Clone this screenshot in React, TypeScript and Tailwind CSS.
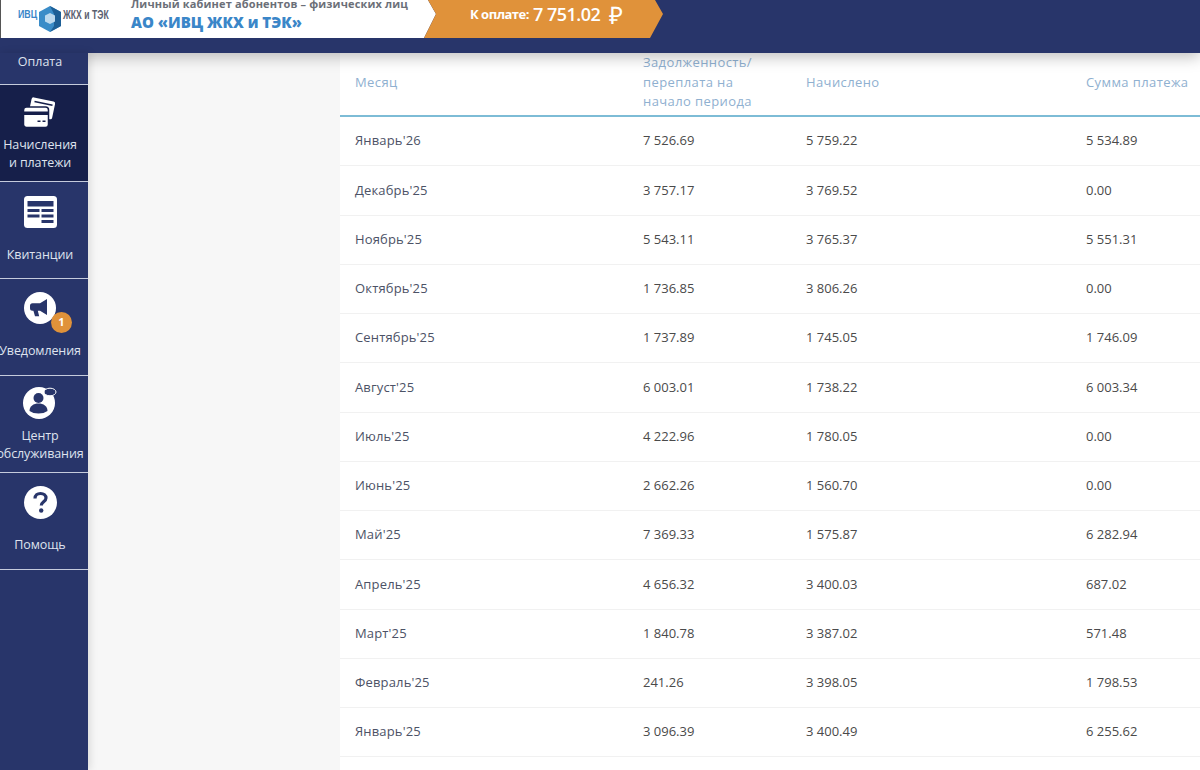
const rows = [
  ["Январь'26", "7 526.69", "5 759.22", "5 534.89"],
  ["Декабрь'25", "3 757.17", "3 769.52", "0.00"],
  ["Ноябрь'25", "5 543.11", "3 765.37", "5 551.31"],
  ["Октябрь'25", "1 736.85", "3 806.26", "0.00"],
  ["Сентябрь'25", "1 737.89", "1 745.05", "1 746.09"],
  ["Август'25", "6 003.01", "1 738.22", "6 003.34"],
  ["Июль'25", "4 222.96", "1 780.05", "0.00"],
  ["Июнь'25", "2 662.26", "1 560.70", "0.00"],
  ["Май'25", "7 369.33", "1 575.87", "6 282.94"],
  ["Апрель'25", "4 656.32", "3 400.03", "687.02"],
  ["Март'25", "1 840.78", "3 387.02", "571.48"],
  ["Февраль'25", "241.26", "3 398.05", "1 798.53"],
  ["Январь'25", "3 096.39", "3 400.49", "6 255.62"],
];

function CardsIcon() {
  return (
    <svg width="34" height="32" viewBox="0 0 34 32">
      <rect x="9" y="1" width="24" height="18" rx="2" fill="white" transform="rotate(12 9 1)" />
      <path d="M11.500 5.500 29.500 9.300" stroke="#161f4a" strokeWidth="1.600" />
      <rect x="0.500" y="11" width="25" height="20.500" rx="3" fill="white" stroke="#161f4a" strokeWidth="1.500" />
      <rect x="1" y="15.500" width="24" height="3.500" fill="#161f4a" />
      <rect x="14.500" y="24.500" width="3" height="1.500" fill="#161f4a" />
      <rect x="19.500" y="24.500" width="3" height="1.500" fill="#161f4a" />
    </svg>
  );
}

function TableIcon() {
  return (
    <svg width="33" height="32" viewBox="0 0 33 32">
      <rect width="33" height="32" rx="3.500" fill="white" />
      <g fill="#28356a">
        <rect x="3.500" y="5" width="26" height="5.500" />
        <rect x="3.500" y="13" width="12" height="3" />
        <rect x="17.500" y="13" width="12" height="3" />
        <rect x="3.500" y="18.500" width="12" height="3" />
        <rect x="17.500" y="18.500" width="12" height="3" />
        <rect x="17.500" y="24" width="12" height="3" />
      </g>
    </svg>
  );
}

function HornIcon() {
  return (
    <svg width="32" height="32" viewBox="0 0 32 32">
      <circle cx="16" cy="16" r="16" fill="white" />
      <path
        d="M23 7v16l-7-4.200h-2.200l1.400 5.400H11l-1.600-5.400H8.500A2.500 2.500 0 0 1 6 16.300v-2.600A2.500 2.500 0 0 1 8.500 11.200H16z"
        fill="#28356a"
      />
    </svg>
  );
}

function SupportIcon() {
  return (
    <svg width="34" height="32" viewBox="0 0 34 32">
      <circle cx="16" cy="16" r="16" fill="white" />
      <circle cx="15.500" cy="11" r="5" fill="#28356a" />
      <path d="M6.500 24c0-5 4-7.500 9-7.500s9 2.500 9 7.500q-3.500 2.500-9 2.500t-9-2.500z" fill="#28356a" />
      <ellipse cx="27" cy="5" rx="6" ry="3.800" fill="#28356a" stroke="white" strokeWidth="1" />
    </svg>
  );
}

function HelpIcon() {
  return (
    <svg width="33" height="33" viewBox="0 0 33 33">
      <circle cx="16.500" cy="16.500" r="16.500" fill="white" />
      <path
        d="M11 12.500c0-3.200 2.400-5 5.500-5 3.200 0 5.500 1.800 5.500 4.600 0 3.600-4.700 3.900-4.700 7.400"
        fill="none"
        stroke="#28356a"
        strokeWidth="3.200"
      />
      <circle cx="17.200" cy="24.500" r="2.200" fill="#28356a" />
    </svg>
  );
}

function NavItem({
  label,
  icon,
  active,
  badge,
  iconClass,
}: {
  label: string[];
  icon: React.ReactNode;
  active?: boolean;
  badge?: boolean;
  iconClass: string;
}) {
  return (
    <div
      className={`h-[97px] pr-[8px] flex flex-col items-center border-b border-[#c5cbdc] ${
        active ? "bg-[#161f4a]" : ""
      }`}
    >
      <div className={`relative h-[33px] flex items-start justify-center ${iconClass}`}>
        {icon}
        {badge && (
          <span className="absolute left-[27px] top-[20px] size-[21px] rounded-full bg-[#e0923a] text-white text-[11px] font-bold flex items-center justify-center">
            1
          </span>
        )}
      </div>
      <div
        className={`flex flex-col items-center whitespace-nowrap text-center text-[12.500px] tracking-[-0.1px] leading-[17.500px] text-[#dfe3ee] ${
          label.length > 1 ? "mt-[7px]" : "mt-[17px]"
        }`}
      >
        {label.map((l) => (
          <div key={l}>{l}</div>
        ))}
      </div>
    </div>
  );
}

export default function App() {
  return (
    <div className="h-[770px] w-[1200px] overflow-hidden flex flex-col bg-[#f7f7f7] font-['Open_Sans',sans-serif]">
      {/* header */}
      <header className="h-[53px] shrink-0 bg-[#28356a] relative z-10 shadow-[0_4px_14px_rgba(0,0,0,0.25)]">
        <div className="h-[38px] flex">
          <div className="w-[437px] h-[38px] bg-white border-l border-[#555] flex [clip-path:polygon(0_0,428px_0,436px_14px,424px_38px,0_38px)]">
            <div className="w-[130px] shrink-0 flex items-center pl-[17px] pb-[9px]">
              <span className="font-['Liberation_Sans',sans-serif] text-[11px] font-bold text-[#3a86c8] scale-x-[0.8] origin-left w-[21px] whitespace-nowrap">
                ИВЦ
              </span>
              <svg width="22" height="26" viewBox="0 0 22 26" className="shrink-0 mt-[9px]">
                <path d="M11 0 22 6v14l-11 6L0 20V6z" fill="#3a8cc8" />
                <path d="M11 0 22 6v14l-11 6 4-6V8z" fill="#1d5f96" />
                <path d="M6 9.500 11 7l5 2.500v6L11 18l-5-2.500z" fill="#bcd9ee" />
              </svg>
              <span className="font-['Liberation_Sans',sans-serif] text-[12px] font-bold text-[#5a6070] scale-x-[0.72] origin-left whitespace-nowrap ml-[2px]">
                ЖКХ и ТЭК
              </span>
            </div>
            <div className="-mt-[3px] whitespace-nowrap">
              <div className="text-[11px] leading-[14px] font-bold text-[#6b6f78] tracking-[0.15px]">
                Личный кабинет абонентов – физических лиц
              </div>
              <div className="text-[15px] leading-[22px] font-extrabold text-[#3a86c8]">АО «ИВЦ ЖКХ и ТЭК»</div>
            </div>
          </div>
          <div className="w-[239px] h-[38px] -ml-[13px] bg-[#e0923a] text-white flex items-center pl-[46px] pb-[9px] [clip-path:polygon(4px_0,231px_0,239px_14px,226px_38px,0_38px,12px_14px)]">
            <span className="text-[13px] font-bold tracking-[-0.5px] w-[63px] whitespace-nowrap">К оплате:</span>
            <span className="text-[18px] font-semibold tracking-[-0.5px] w-[76px] whitespace-nowrap">7 751.02</span>
            <span className="text-[24px] leading-none">₽</span>
          </div>
        </div>
      </header>

      <div className="flex flex-1 min-h-0">
        {/* sidebar */}
        <aside className="w-[88px] shrink-0 bg-[#28356a] shadow-[2px_0_8px_rgba(0,0,0,0.12)] relative z-20 overflow-hidden">
          <div className="h-[32px] pr-[8px] border-b border-[#c5cbdc] text-center text-[12.500px] leading-[17px] text-[#dfe3ee]">
            Оплата
          </div>
          <NavItem label={["Начисления", "и платежи"]} icon={<CardsIcon />} active iconClass="mt-[11px]" />
          <NavItem label={["Квитанции"]} icon={<TableIcon />} iconClass="mt-[14px]" />
          <NavItem label={["Уведомления"]} icon={<HornIcon />} badge iconClass="mt-[13px]" />
          <NavItem label={["Центр", "обслуживания"]} icon={<SupportIcon />} iconClass="mt-[11px]" />
          <NavItem label={["Помощь"]} icon={<HelpIcon />} iconClass="mt-[13px]" />
        </aside>

        {/* table */}
        <main className="flex-1 pl-[252px]">
          <div className="bg-white h-full">
            <div className="h-[53px] pb-[9px] box-content grid grid-cols-[288px_163px_280px_1fr] pl-[15px] items-center border-b-2 border-[#7dbcd6] text-[13px] tracking-[0.4px] leading-[19.500px] text-[#8fb0d0]">
              <div>Месяц</div>
              <div className="whitespace-nowrap">
                Задолженность/
                <br />
                переплата на
                <br />
                начало периода
              </div>
              <div>Начислено</div>
              <div>Сумма платежа</div>
            </div>
            {rows.map((r) => (
              <div
                key={r[0]}
                className="h-[49.250px] grid grid-cols-[288px_163px_280px_1fr] pl-[15px] items-center border-b border-[#f1f1f1] text-[13px] text-[#4a4a4a]"
              >
                <div className="text-[#4c5266] tracking-[0.15px]">{r[0]}</div>
                <div>{r[1]}</div>
                <div>{r[2]}</div>
                <div>{r[3]}</div>
              </div>
            ))}
          </div>
        </main>
      </div>
    </div>
  );
}
